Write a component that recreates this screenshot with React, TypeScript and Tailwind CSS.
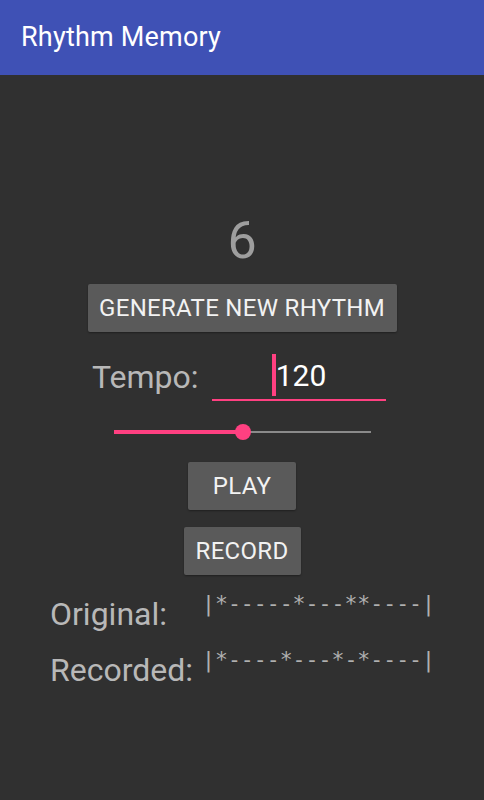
import React from "react";

const roboto = { fontFamily: "Roboto, 'Noto Sans', sans-serif" };

export default function App() {
  return (
    <div className="w-[484px] h-[800px] flex flex-col bg-[#303030]" style={roboto}>
      <header className="h-[75px] bg-[#3F51B5] flex items-center pl-[21px] shrink-0">
        <span className="text-[27px] leading-none text-white font-normal tracking-[0.2px]">Rhythm Memory</span>
      </header>
      <main className="flex-1 flex flex-col">
        <div className="mt-[140px] text-center text-[52px] leading-none text-[#9e9e9e]">6</div>
        <button className="mt-[17px] mx-auto w-[309px] h-[48px] rounded-[2px] bg-[#5a5a5a] flex items-center justify-center text-[24px] leading-none tracking-[0.3px] text-[#f2f2f2] shadow-[0_1px_2px_rgba(0,0,0,0.35)]">
          GENERATE NEW RHYTHM
        </button>
        <div className="mt-[21px] flex items-start pl-[92px]">
          <span className="w-[120px] mt-[8px] text-[32px] leading-none text-[#b8b8b8]">Tempo:</span>
          <div className="w-[174px] h-[48px] border-b-2 border-[#FF4081] flex items-start justify-center">
            <span className="mt-[1px] w-[4px] h-[42px] bg-[#FF4081]"></span>
            <span className="mt-[8px] text-[30px] leading-none text-white">120</span>
          </div>
        </div>
        <div className="mt-[23px] mx-auto w-[257px] h-[16px] relative flex items-center">
          <div className="h-[4px] bg-[#FF4081]" style={{ width: "50.2%" }}></div>
          <div className="flex-1 h-[2px] bg-[#8a8a8a]"></div>
          <div className="absolute w-[16px] h-[16px] rounded-full bg-[#FF4081] top-0" style={{ left: "calc(50.2% - 8px)" }}></div>
        </div>
        <button className="mt-[22px] mx-auto w-[108px] h-[48px] rounded-[2px] bg-[#5a5a5a] flex items-center justify-center text-[24px] leading-none tracking-[0.3px] text-[#f2f2f2] shadow-[0_1px_2px_rgba(0,0,0,0.35)]">
          PLAY
        </button>
        <button className="mt-[17px] mx-auto w-[117px] h-[48px] rounded-[2px] bg-[#5a5a5a] flex items-center justify-center text-[24px] leading-none tracking-[0.3px] text-[#f2f2f2] shadow-[0_1px_2px_rgba(0,0,0,0.35)]">
          RECORD
        </button>
        <div className="mt-[18px] flex items-start pl-[50px]">
          <span className="w-[152px] mt-[5px] text-[32px] leading-none text-[#b8b8b8]">Original:</span>
          <span className="text-[21.5px] leading-none text-[#b0b0b0] whitespace-pre" style={{ fontFamily: "'DejaVu Sans Mono', monospace" }}>|*-----*---**----|</span>
        </div>
        <div className="mt-[19px] flex items-start pl-[50px]">
          <span className="w-[152px] mt-[5px] text-[32px] leading-none text-[#b8b8b8]">Recorded:</span>
          <span className="text-[21.5px] leading-none text-[#b0b0b0] whitespace-pre" style={{ fontFamily: "'DejaVu Sans Mono', monospace" }}>|*----*---*-*----|</span>
        </div>
      </main>
    </div>
  );
}
